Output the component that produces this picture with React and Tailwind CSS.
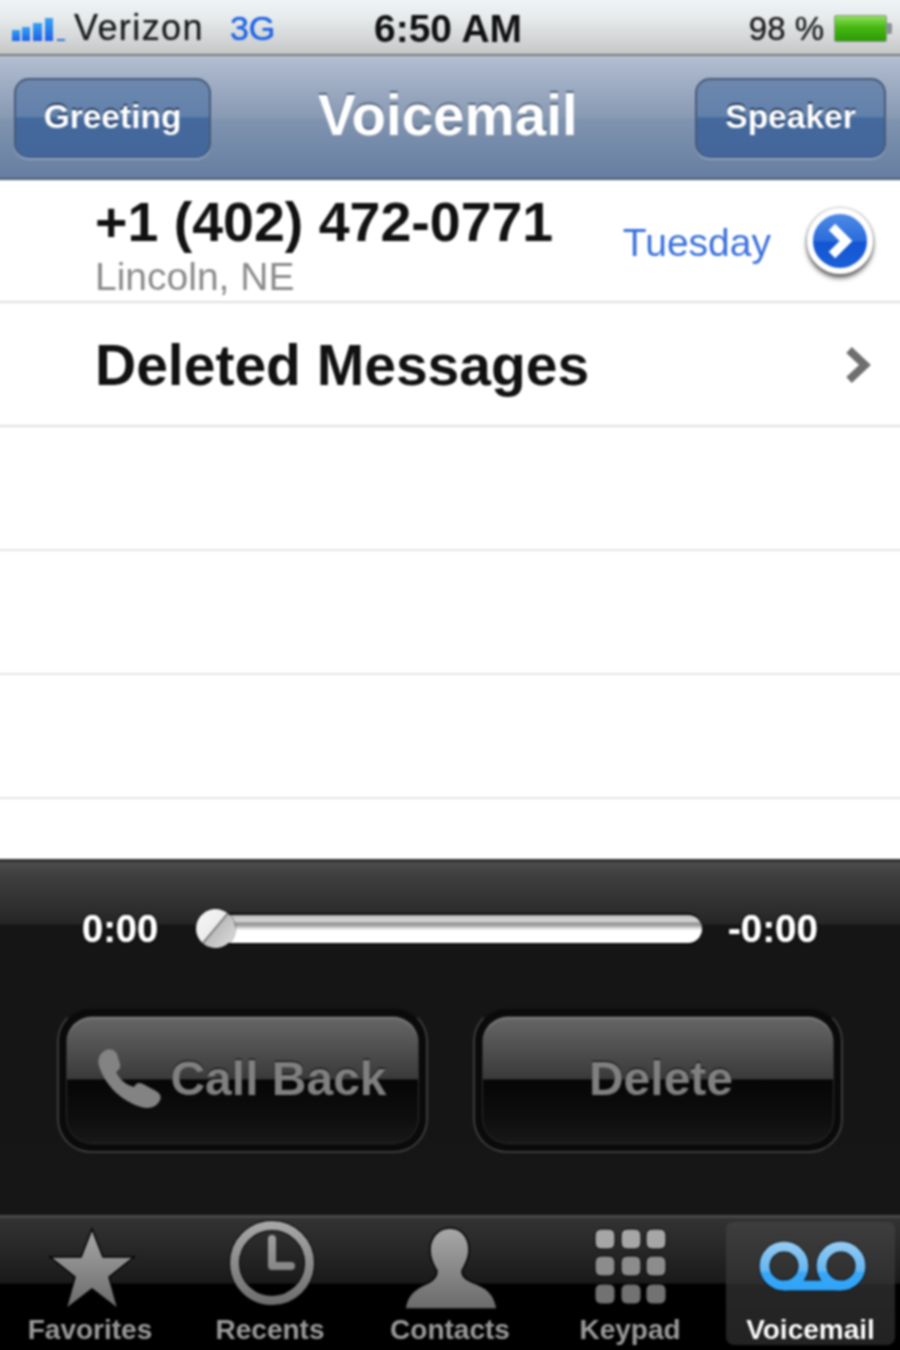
const FONT = "font-['Liberation_Sans',Arial,sans-serif]";

function SignalBars() {
  return (
    <svg width="56" height="26" viewBox="0 0 56 26" className="block">
      <defs>
        <linearGradient id="sig" x1="0" y1="0" x2="0" y2="1">
          <stop offset="0" stopColor="#35a4f4" />
          <stop offset="1" stopColor="#1d5fe8" />
        </linearGradient>
      </defs>
      <rect x="0" y="15" width="8" height="11" fill="url(#sig)" />
      <rect x="10" y="12" width="8" height="14" fill="url(#sig)" />
      <rect x="21" y="8" width="9" height="18" fill="url(#sig)" />
      <rect x="33" y="3" width="8" height="23" fill="url(#sig)" />
      <rect x="45" y="24" width="8" height="2" fill="#2f6fe0" />
    </svg>
  );
}

function Battery() {
  return (
    <div className="flex items-center">
      <div className="h-[27px] w-[53px] rounded-[2px] border border-[#8f9499] bg-[linear-gradient(#8fe05a,#48b814_45%,#2c9a06)]" />
      <div className="h-[11px] w-[5px] rounded-r-[2px] bg-[#8a8f94]" />
    </div>
  );
}

function NavButton({ width, children }) {
  return (
    <button className={`${width} flex h-[80px] items-center justify-center rounded-[15px] border-2 border-[#46597a] border-b-[#3f5e8e] bg-[linear-gradient(#6d88ae,#6281ab_48%,#44699d_50%,#44679b)] pb-[2px] text-[33.5px] font-bold text-white shadow-[0_2px_1px_rgba(255,255,255,0.25)] [text-shadow:0_-2px_1px_#1f3558]`}>
      {children}
    </button>
  );
}

function PhoneIcon() {
  return (
    <svg width="64" height="60" viewBox="0 0 64 60" className="block shrink-0">
      <path
        d="M8 1C12 -1 17 1 19 5L22 15C23 19 21 21 18 23C22 31 28 36 36 38C38 34 41 33 45 35L58 42C63 45 64 49 61 53C57 59 50 60 43 58C24 52 8 38 1 17C-1 10 2 4 8 1Z"
        fill="#838383"
      />
    </svg>
  );
}

function ActionButton({ width, extra, children }) {
  return (
    <div className={`${width} h-[146px] rounded-[34px] border-2 border-[#3c3c3c] border-t-[#141414] bg-[#0a0a0a] p-[8px]`}>
      <button className={`${extra} flex h-full w-full items-center justify-center gap-[8px] rounded-[25px] bg-[linear-gradient(#666666,#3a3a3a_49%,#060606_50%,#0e0e0e_80%,#181818)] text-[48px] font-bold text-[#808080] shadow-[inset_0_2px_0_#7a7a7a,0_0_0_1px_#2e2e2e] [text-shadow:0_-1px_1px_#000]`}>
        {children}
      </button>
    </div>
  );
}

function StarIcon() {
  return (
    <svg width="100" height="93" viewBox="0 0 100 93" className="block">
      <defs>
        <linearGradient id="tabGray" x1="0" y1="0" x2="0" y2="1">
          <stop offset="0" stopColor="#a8a8a8" />
          <stop offset="1" stopColor="#6a6a6a" />
        </linearGradient>
      </defs>
      <path
        d="M52 7L63 35H94L69 55L78 87L52 67L26 87L35 55L10 35H41Z"
        fill="url(#tabGray)"
        stroke="#000"
        strokeWidth="1.5"
      />
    </svg>
  );
}

function ClockIcon() {
  return (
    <svg width="100" height="93" viewBox="0 0 100 93" className="block overflow-visible">
      <defs>
        <linearGradient id="clockGray" gradientUnits="userSpaceOnUse" x1="0" y1="0" x2="0" y2="85">
          <stop offset="0" stopColor="#a8a8a8" />
          <stop offset="1" stopColor="#6c6c6c" />
        </linearGradient>
      </defs>
      <circle cx="52" cy="41" r="37.5" fill="none" stroke="#000" strokeWidth="11" />
      <circle cx="52" cy="41" r="37.5" fill="none" stroke="url(#clockGray)" strokeWidth="9" />
      <path d="M52 17V44H71" fill="none" stroke="url(#clockGray)" strokeWidth="8" strokeLinejoin="round" strokeLinecap="round" />
    </svg>
  );
}

function ContactIcon() {
  return (
    <svg width="100" height="93" viewBox="0 0 100 93" className="block">
      <defs>
        <linearGradient id="contactGray" x1="0" y1="0" x2="0" y2="1">
          <stop offset="0" stopColor="#a8a8a8" />
          <stop offset="1" stopColor="#6a6a6a" />
        </linearGradient>
      </defs>
      <g transform="translate(4 6)">
        <path
          d="M46 0C58 0 65 10 65 22C65 32 60 38 58 43C58 49 62 51 68 54C78 58 90 62 93 81H1C3 66 12 60 24 55C30 52 33 49 33 43C30 38 26 32 26 22C26 10 34 0 46 0Z"
          fill="url(#contactGray)"
          stroke="#000"
          strokeWidth="1.5"
        />
      </g>
    </svg>
  );
}

function KeypadIcon() {
  const fills = ["#a6a6a6", "#8c8c8c", "#727272"];
  return (
    <svg width="100" height="93" viewBox="0 0 100 93" className="block">
      {[7, 34, 62].map((y, row) =>
        [15, 41, 66].map((x) => (
          <rect key={`${x}-${y}`} x={x} y={y} width="20" height="20" rx="6" fill={fills[row]} stroke="#000" strokeWidth="1" />
        ))
      )}
    </svg>
  );
}

function VoicemailIcon() {
  return (
    <svg width="120" height="93" viewBox="0 0 120 93" className="block">
      <defs>
        <linearGradient id="vmBlue" gradientUnits="userSpaceOnUse" x1="0" y1="18" x2="0" y2="70">
          <stop offset="0" stopColor="#9bcdf2" />
          <stop offset="0.6" stopColor="#63b6f2" />
          <stop offset="0.62" stopColor="#38a6f6" />
          <stop offset="1" stopColor="#2fa4f8" />
        </linearGradient>
      </defs>
      <g fill="none" stroke="#000" strokeWidth="11.5">
        <circle cx="33" cy="44" r="19.5" />
        <circle cx="90" cy="44" r="19.5" />
        <path d="M33 63.5H90" />
      </g>
      <g fill="none" stroke="url(#vmBlue)" strokeWidth="10">
        <circle cx="33" cy="44" r="19.5" />
        <circle cx="90" cy="44" r="19.5" />
        <path d="M33 63.5H90" />
      </g>
    </svg>
  );
}

const tabs = [
  { label: "Favorites", icon: <StarIcon /> },
  { label: "Recents", icon: <ClockIcon /> },
  { label: "Contacts", icon: <ContactIcon /> },
  { label: "Keypad", icon: <KeypadIcon /> },
  { label: "Voicemail", icon: <VoicemailIcon />, active: true },
];

export default function App() {
  return (
    <div className="h-[1350px] w-[900px] overflow-hidden">
      {/* 4px bleed on every side so the blur does not fade out at the page edge */}
      <div className={`${FONT} -ml-[4px] -mt-[4px] flex h-[1358px] w-[908px] flex-col bg-white blur-[0.8px]`}>
        {/* status bar */}
        <div className="flex h-[60px] shrink-0 items-center border-b-2 border-[#77797b] bg-[linear-gradient(#f0f6f8,#e6eaeb_40%,#c6c7c7)] pl-[16px] pr-[12px] pt-[6px] text-[#1c1c1c]">
          <div className="flex w-[340px] items-center">
            <SignalBars />
            <span className="ml-[6px] text-[36px] leading-none tracking-[1.4px] [text-shadow:0_0_1px_#444]">Verizon</span>
            <span className="ml-[26px] text-[34px] leading-none text-[#1c62e4] [text-shadow:0_0_1px_#1c62e4]">3G</span>
          </div>
          <span className="ml-[22px] text-[39px] font-bold leading-none text-[#111]">6:50 AM</span>
          <div className="ml-auto flex items-center">
            <span className="text-[33px] leading-none [text-shadow:0_0_1px_#444]">98 %</span>
            <span className="ml-[10px]"><Battery /></span>
          </div>
        </div>

        {/* nav bar */}
        <div className="flex h-[124px] shrink-0 items-center border-y-2 border-t-[#b9c4d3] border-b-[#4b5a72] bg-[linear-gradient(#b1bdd0,#8899b3_50%,#8094b0_51%,#667ea1)] px-[18px]">
          <NavButton width="w-[197px]">Greeting</NavButton>
          <h1 className="-mt-[4px] ml-[107px] text-[56.5px] font-bold leading-none text-white [text-shadow:0_-2px_1px_#4e5f7c]">Voicemail</h1>
          <div className="ml-auto">
            <NavButton width="w-[191px]">Speaker</NavButton>
          </div>
        </div>

        {/* voicemail rows */}
        <div className="flex h-[123px] shrink-0 items-start justify-between border-b-2 border-[#dfdfdf] pl-[99px] pr-[31px]">
          <div className="pt-[14px]">
            <div className="text-[55.5px] font-bold leading-[56px] text-[#111]">+1 (402) 472-0771</div>
            <div className="mt-[6px] text-[39px] leading-[42px] text-[#8a8a8a]">Lincoln, NE</div>
          </div>
          <div className="flex h-full items-center">
            <span className="pt-[4px] text-[39px] leading-none text-[#3a70dc]">Tuesday</span>
            <div className="ml-[36px] flex h-[66px] w-[66px] items-center justify-center rounded-full border-[6px] border-white bg-[linear-gradient(#4f8ae6,#2a6cdc_50%,#1355d2_52%,#1a5fd8)] shadow-[0_4px_5px_rgba(0,0,0,0.6),0_0_3px_rgba(0,0,0,0.5)]">
              <svg width="28" height="36" viewBox="0 0 28 36" className="block">
                <path d="M6 4L20 18L6 32" fill="none" stroke="#fff" strokeWidth="9" />
              </svg>
            </div>
          </div>
        </div>
        <div className="flex h-[124px] shrink-0 items-center justify-between border-b-2 border-[#dfdfdf] pl-[99px] pr-[31px] pt-[2px]">
          <span className="text-[57px] font-bold leading-none text-[#111]">Deleted Messages</span>
          <svg width="28" height="36" viewBox="0 0 28 36" className="block">
            <path d="M4 3L20 18L4 33" fill="none" stroke="#6e6e6e" strokeWidth="8" />
          </svg>
        </div>
        <div className="h-[124px] shrink-0 border-b-2 border-[#e4e4e4]" />
        <div className="h-[124px] shrink-0 border-b-2 border-[#e4e4e4]" />
        <div className="h-[124px] shrink-0 border-b-2 border-[#e4e4e4]" />
        <div className="h-[60px] shrink-0" />

        {/* playback panel */}
        <div className="h-[356px] shrink-0 border-t-[3px] border-[#2e2e2e] bg-[linear-gradient(#4c4c4c_0px,#3e3e3e_15px,#262626_62px,#151515_63px,#161616_100%)] pl-[86px] pt-[37px]">
          <div className="flex h-[60px] items-center">
            <span className="w-[116px] text-[38px] font-bold leading-none text-white [text-shadow:0_0_1px_#fff,0_0_3px_#000,0_0_3px_#000]">0:00</span>
            <div className="relative h-[28px] w-[504px] rounded-full bg-[linear-gradient(#b5b5b5,#d9d9d9_20%,#8c8c8c_32%,#bdbdbd_42%,#ffffff_55%,#ffffff)] shadow-[0_-2px_0_#0a0a0a,0_2px_0_#0a0a0a]">
              <div className="absolute -left-[2px] -top-[6px] h-[39px] w-[39px] rotate-[-50deg] rounded-full bg-[linear-gradient(#f4f4f4,#ececec_46%,#777_48%,#777_50%,#bdbdbd_53%,#d4d4d4)] shadow-[0_0_2px_#000]" />
            </div>
            <span className="ml-[26px] text-[38.5px] font-bold leading-none text-white [text-shadow:0_0_1px_#fff,0_0_3px_#000,0_0_3px_#000]">-0:00</span>
          </div>
          <div className="-ml-[25px] mt-[48px] flex gap-[45px]">
            <ActionButton width="w-[371px]" extra="pb-[2px]">
              <PhoneIcon />
              <span>Call Back</span>
            </ActionButton>
            <ActionButton width="w-[370px]" extra="pb-[2px] pl-[6px]">
              <span>Delete</span>
            </ActionButton>
          </div>
        </div>

        {/* tab bar */}
        <div className="flex h-[139px] shrink-0 items-start border-t-[3px] border-[#484848] bg-[linear-gradient(#333333,#1a1a1a_65px,#000000_66px,#000000)] px-[4px] pt-[4px]">
          {tabs.map((tab) => (
            <div
              key={tab.label}
              className={
                tab.active
                  ? "flex h-[123px] w-[169px] ml-[6px] flex-col items-center rounded-[8px] bg-[linear-gradient(#3e3e3e,#2e2e2e_50%,#262626_51%,#232323)]"
                  : "flex h-[123px] w-[180px] flex-col items-center"
              }
            >
              {tab.icon}
              <span
                className={
                  tab.active
                    ? "text-[28px] font-bold leading-[30px] text-white [text-shadow:0_0_2px_#000]"
                    : "text-[28px] font-bold leading-[30px] text-[#9a9a9a]"
                }
              >
                {tab.label}
              </span>
            </div>
          ))}
        </div>
      </div>
    </div>
  );
}
